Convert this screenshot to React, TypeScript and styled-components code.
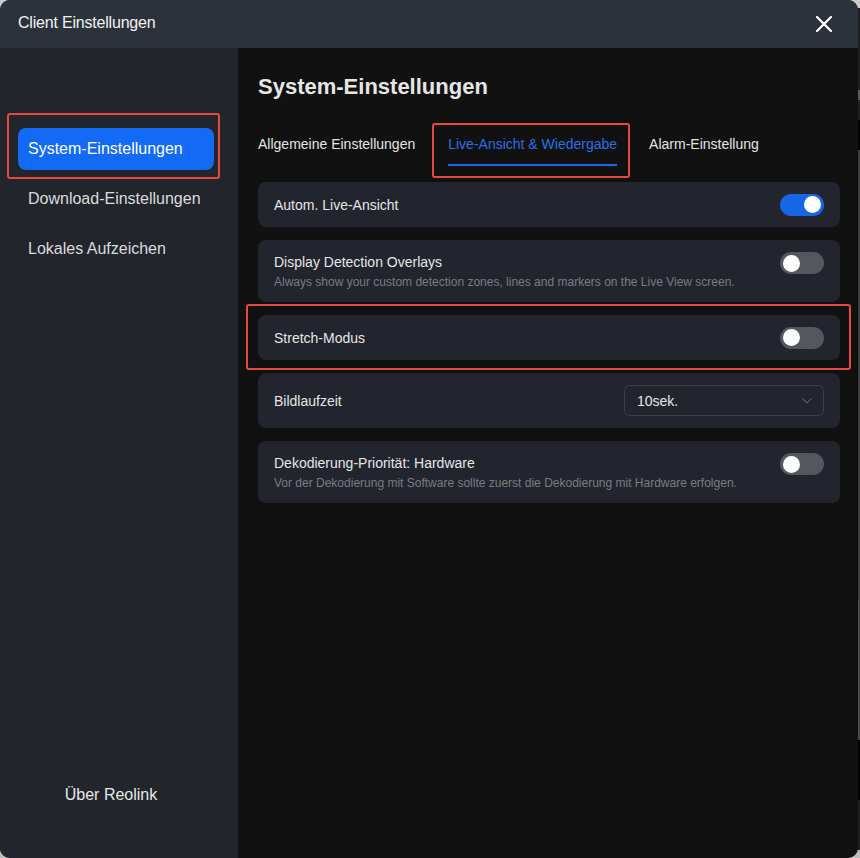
import React, { useState } from "react";
import styled, { createGlobalStyle } from "styled-components";

const Global = createGlobalStyle`
  html, body { margin: 0; padding: 0; }
  body {
    background: #2a2c31;
    font-family: "Liberation Sans", Arial, sans-serif;
    width: 860px;
    height: 858px;
    overflow: hidden;
  }
`;

const Page = styled.div`
  width: 860px;
  height: 858px;
  display: flex;
  background: linear-gradient(to bottom, #c9c9c9 0 8px, #1c1e22 8px 90px, #5a5c60 90px 100px, #1c1e22 100px 120px, #000 120px 150px, #3a3b3e 150px 600px, #4a4b4f 600px 740px, #000 740px 800px, #1c1e22 800px 850px, #bdbdbd 850px);
`;

const Dialog = styled.div`
  width: 858px;
  height: 858px;
  border-radius: 10px;
  overflow: hidden;
  display: flex;
  flex-direction: column;
  background: #111111;
`;

const Header = styled.div`
  height: 48px;
  flex: none;
  display: flex;
  align-items: center;
  justify-content: space-between;
  padding: 0 24px 0 18px;
  background: #2c323c;
`;

const Title = styled.div`
  color: #f2f2f2;
  font-size: 16px;
  letter-spacing: -0.2px;
  margin-top: -2px;
`;

const Close = styled.button`
  background: none;
  border: none;
  padding: 0;
  width: 20px;
  height: 20px;
  display: flex;
  align-items: center;
  justify-content: center;
  cursor: pointer;
`;

const Body = styled.div`
  flex: 1;
  display: flex;
  min-height: 0;
`;

const Sidebar = styled.div`
  width: 238px;
  flex: none;
  background: #22252c;
  display: flex;
  flex-direction: column;
  padding: 80px 0 54px 18px;
  box-sizing: border-box;
`;

const NavList = styled.div`
  display: flex;
  flex-direction: column;
  align-items: flex-start;
  gap: 8px;
  flex: 1;
`;

const Highlight = styled.div`
  position: relative;
`;

const RedBox = styled.div<{ $t: number; $r: number; $b: number; $l: number }>`
  position: absolute;
  top: ${(p) => -p.$t}px;
  right: ${(p) => -p.$r}px;
  bottom: ${(p) => -p.$b}px;
  left: ${(p) => -p.$l}px;
  border: 2px solid #e8493c;
  border-radius: 3px;
  pointer-events: none;
`;

const NavItem = styled.div<{ $active?: boolean }>`
  width: 196px;
  height: 42px;
  box-sizing: border-box;
  display: flex;
  align-items: center;
  padding-left: 10px;
  border-radius: 8px;
  font-size: 16px;
  color: ${(p) => (p.$active ? "#ffffff" : "#dcdcdc")};
  background: ${(p) => (p.$active ? "#126af5" : "transparent")};
`;

const About = styled.div`
  width: 186px;
  text-align: center;
  font-size: 16px;
  color: #e8e8e8;
`;

const Content = styled.div`
  flex: 1;
  padding: 25px 18px 0 20px;
  display: flex;
  flex-direction: column;
`;

const Heading = styled.h1`
  margin: 0;
  font-size: 22px;
  font-weight: bold;
  color: #e6e6e6;
  line-height: 28px;
`;

const Tabs = styled.div`
  display: flex;
  gap: 32px;
  margin-top: 23px;
`;

const Tab = styled.div<{ $active?: boolean }>`
  padding: 12px 0;
  line-height: 16px;
  font-size: 14px;
  color: ${(p) => (p.$active ? "#2b6fe6" : "#e4e4e4")};
  border-bottom: 2px solid ${(p) => (p.$active ? "#1c68ea" : "transparent")};
`;

const ActiveTab = styled(Highlight)`
  margin-left: 1px;
`;

const Cards = styled.div`
  display: flex;
  flex-direction: column;
  gap: 13px;
  margin-top: 16px;
`;

const Card = styled.div<{ $h: number }>`
  background: #22252d;
  border-radius: 8px;
  min-height: ${(p) => p.$h}px;
  box-sizing: border-box;
  padding: 0 16px;
  display: flex;
  align-items: center;
  justify-content: space-between;
`;

const CardText = styled.div`
  display: flex;
  flex-direction: column;
  gap: 5px;
`;

const Label = styled.div`
  font-size: 14px;
  color: #e6e6e6;
`;

const Desc = styled.div`
  font-size: 12px;
  color: #7a7c80;
`;

const ToggleTrack = styled.div<{ $on?: boolean }>`
  width: 44px;
  height: 22px;
  border-radius: 11px;
  background: ${(p) => (p.$on ? "#1766e6" : "#54575d")};
  display: flex;
  align-items: center;
  justify-content: ${(p) => (p.$on ? "flex-end" : "flex-start")};
  padding: 0 3px;
  box-sizing: border-box;
  flex: none;
  cursor: pointer;
`;

const Knob = styled.div`
  width: 17px;
  height: 17px;
  border-radius: 50%;
  background: #ffffff;
`;

const AlignTop = styled.div`
  align-self: flex-start;
  margin-top: 12px;
`;

const Select = styled.div`
  width: 200px;
  height: 31px;
  border: 1px solid #3c3f46;
  border-radius: 6px;
  box-sizing: border-box;
  display: flex;
  align-items: center;
  justify-content: space-between;
  padding: 0 10px 0 12px;
  font-size: 14px;
  color: #e6e6e6;
`;

const Toggle: React.FC<{ on?: boolean }> = ({ on }) => {
  const [v, setV] = useState(!!on);
  return (
    <ToggleTrack $on={v} onClick={() => setV(!v)}>
      <Knob />
    </ToggleTrack>
  );
};

export default function App() {
  return (
    <>
      <Global />
      <Page>
        <Dialog>
          <Header>
            <Title>Client Einstellungen</Title>
            <Close aria-label="close">
              <svg width="18" height="18" viewBox="0 0 18 18">
                <path d="M2 2 L16 16 M16 2 L2 16" stroke="#ffffff" strokeWidth="2.2" strokeLinecap="round" />
              </svg>
            </Close>
          </Header>
          <Body>
            <Sidebar>
              <NavList>
                <Highlight>
                  <NavItem $active>System-Einstellungen</NavItem>
                  <RedBox $t={15} $r={6} $b={9} $l={11} />
                </Highlight>
                <NavItem>Download-Einstellungen</NavItem>
                <NavItem>Lokales Aufzeichen</NavItem>
              </NavList>
              <About>Über Reolink</About>
            </Sidebar>
            <Content>
              <Heading>System-Einstellungen</Heading>
              <Tabs>
                <Tab>Allgemeine Einstellungen</Tab>
                <ActiveTab>
                  <Tab $active>Live-Ansicht &amp; Wiedergabe</Tab>
                  <RedBox $t={1} $r={13} $b={12} $l={16} />
                </ActiveTab>
                <Tab>Alarm-Einstellung</Tab>
              </Tabs>
              <Cards>
                <Card $h={45}>
                  <Label>Autom. Live-Ansicht</Label>
                  <Toggle on />
                </Card>
                <Card $h={62}>
                  <CardText>
                    <Label>Display Detection Overlays</Label>
                    <Desc>Always show your custom detection zones, lines and markers on the Live View screen.</Desc>
                  </CardText>
                  <AlignTop>
                    <Toggle />
                  </AlignTop>
                </Card>
                <Highlight>
                  <Card $h={45}>
                    <Label>Stretch-Modus</Label>
                    <Toggle />
                  </Card>
                  <RedBox $t={11} $r={11} $b={10} $l={12} />
                </Highlight>
                <Card $h={55}>
                  <Label>Bildlaufzeit</Label>
                  <Select>
                    <span>10sek.</span>
                    <svg width="12" height="8" viewBox="0 0 12 8">
                      <path d="M1.5 1.5 L6 6 L10.5 1.5" stroke="#6d7076" strokeWidth="1" fill="none" />
                    </svg>
                  </Select>
                </Card>
                <Card $h={62}>
                  <CardText>
                    <Label>Dekodierung-Priorität: Hardware</Label>
                    <Desc>Vor der Dekodierung mit Software sollte zuerst die Dekodierung mit Hardware erfolgen.</Desc>
                  </CardText>
                  <AlignTop>
                    <Toggle />
                  </AlignTop>
                </Card>
              </Cards>
            </Content>
          </Body>
        </Dialog>
      </Page>
    </>
  );
}
